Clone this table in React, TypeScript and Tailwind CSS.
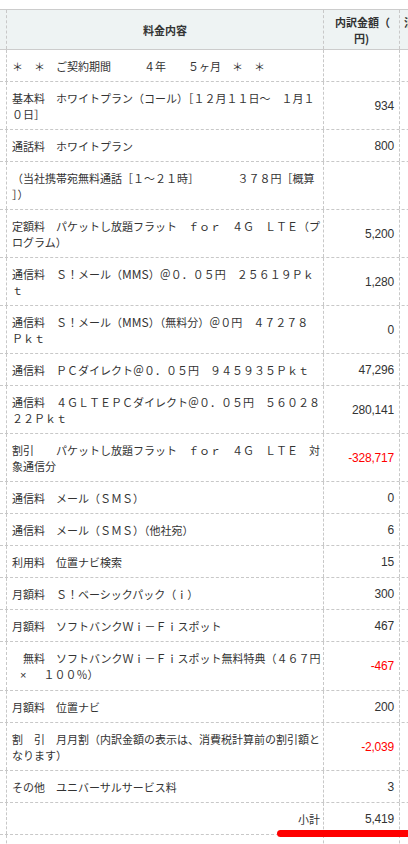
import React from 'react';

type Row = {
  lines: React.ReactNode[];
  amount: string;
  red?: boolean;
};

const rows: Row[] = [
  { lines: ['＊　＊　ご契約期間　　　４年　　５ヶ月　＊　＊'], amount: '' },
  { lines: ['基本料　ホワイトプラン（コール）［１２月１１日〜　１月１', '０日］'], amount: '934' },
  { lines: ['通話料　ホワイトプラン'], amount: '800' },
  { lines: ['（当社携帯宛無料通話［１〜２１時］　　　　３７８円［概算', '］）'], amount: '' },
  { lines: ['定額料　パケットし放題フラット　ｆｏｒ　４Ｇ　ＬＴＥ（プ', 'ログラム）'], amount: '5,200' },
  {
    lines: [
      <>
        通信料　Ｓ！メール（<span className="text-[12px]">MMS</span>）＠０．０５円　２５６１９Ｐｋ
      </>,
      'ｔ',
    ],
    amount: '1,280',
  },
  {
    lines: [
      <>
        通信料　Ｓ！メール（<span className="text-[12px]">MMS</span>）（無料分）＠０円　４７２７８
      </>,
      'Ｐｋｔ',
    ],
    amount: '0',
  },
  { lines: ['通信料　ＰＣダイレクト＠０．０５円　９４５９３５Ｐｋｔ'], amount: '47,296' },
  { lines: ['通信料　４ＧＬＴＥＰＣダイレクト＠０．０５円　５６０２８', '２２Ｐｋｔ'], amount: '280,141' },
  { lines: ['割引　　パケットし放題フラット　ｆｏｒ　４Ｇ　ＬＴＥ　対', '象通信分'], amount: '-328,717', red: true },
  { lines: ['通信料　メール（ＳＭＳ）'], amount: '0' },
  { lines: ['通信料　メール（ＳＭＳ）（他社宛）'], amount: '6' },
  { lines: ['利用料　位置ナビ検索'], amount: '15' },
  { lines: ['月額料　Ｓ！ベーシックパック（ｉ）'], amount: '300' },
  { lines: ['月額料　ソフトバンクＷｉ－Ｆｉスポット'], amount: '467' },
  {
    lines: [
      '　無料　ソフトバンクＷｉ－Ｆｉスポット無料特典（４６７円',
      <>
        <span className="ml-[8px] font-['Liberation_Sans',sans-serif]">×</span>
        <span className="ml-[17px]">１００％）</span>
      </>,
    ],
    amount: '-467',
    red: true,
  },
  { lines: ['月額料　位置ナビ'], amount: '200' },
  { lines: ['割　引　月月割（内訳金額の表示は、消費税計算前の割引額と', 'なります）'], amount: '-2,039', red: true },
  { lines: ['その他　ユニバーサルサービス料'], amount: '3' },
];

const cell = 'border-r border-dashed border-[#c8c8c8]';
const rowCls = 'grid grid-cols-[7px_317px_76px_100px] border-b border-dashed border-[#c8c8c8]';

const App = () => {
  return (
    <div className="relative min-h-[844px] w-[408px] overflow-hidden bg-white pt-[9px] font-['Noto_Sans_CJK_JP',sans-serif] text-[11px] leading-[16px] text-[#333]">
      <div className="w-[500px]">
        {/* header */}
        <div className="grid grid-cols-[7px_317px_76px_100px] border-y border-solid border-[#cccccc] bg-[#eef3f3] font-bold">
          <div className={`h-[39px] ${cell}`}></div>
          <div className={`flex h-[39px] items-center justify-center ${cell}`}>料金内容</div>
          <div className={`flex h-[39px] flex-col items-center justify-center ${cell}`}>
            <span className="pl-[2px]">内訳金額（</span>
            <span>円)</span>
          </div>
          <div className="h-[39px] pl-[4px] pt-[4px]">消費税</div>
        </div>

        {rows.map((row, i) => (
          <div key={i} className={rowCls}>
            <div className={cell}></div>
            <div className={`pl-[5px] pt-[8px] pb-[7px] whitespace-nowrap ${cell}`}>
              {row.lines.map((line, j) => (
                <div key={j}>{line}</div>
              ))}
            </div>
            <div
              className={`flex items-center justify-end pr-[5px] font-['Liberation_Sans',sans-serif] text-[12px] tracking-[-0.2px] ${cell} ${
                row.red ? 'text-[#ff0000]' : ''
              }`}
            >
              {row.amount}
            </div>
            <div></div>
          </div>
        ))}

        {/* subtotal */}
        <div className={rowCls}>
          <div className={cell}></div>
          <div className={`flex items-center justify-end pt-[8px] pb-[7px] pr-[3px] ${cell}`}>小計</div>
          <div className={`flex items-center justify-end pr-[5px] font-['Liberation_Sans',sans-serif] text-[12px] tracking-[-0.2px] ${cell}`}>
            5,419
          </div>
          <div></div>
        </div>

        <div className="grid h-[30px] grid-cols-[7px_317px_76px_100px]">
          <div className={cell}></div>
          <div className={cell}></div>
          <div className={cell}></div>
          <div></div>
        </div>
      </div>

      {/* red annotation */}
      <div className="absolute left-[277px] top-[830px] h-[7px] w-[134px] rounded-full bg-[#ff0000]"></div>
    </div>
  );
};

export default App;
